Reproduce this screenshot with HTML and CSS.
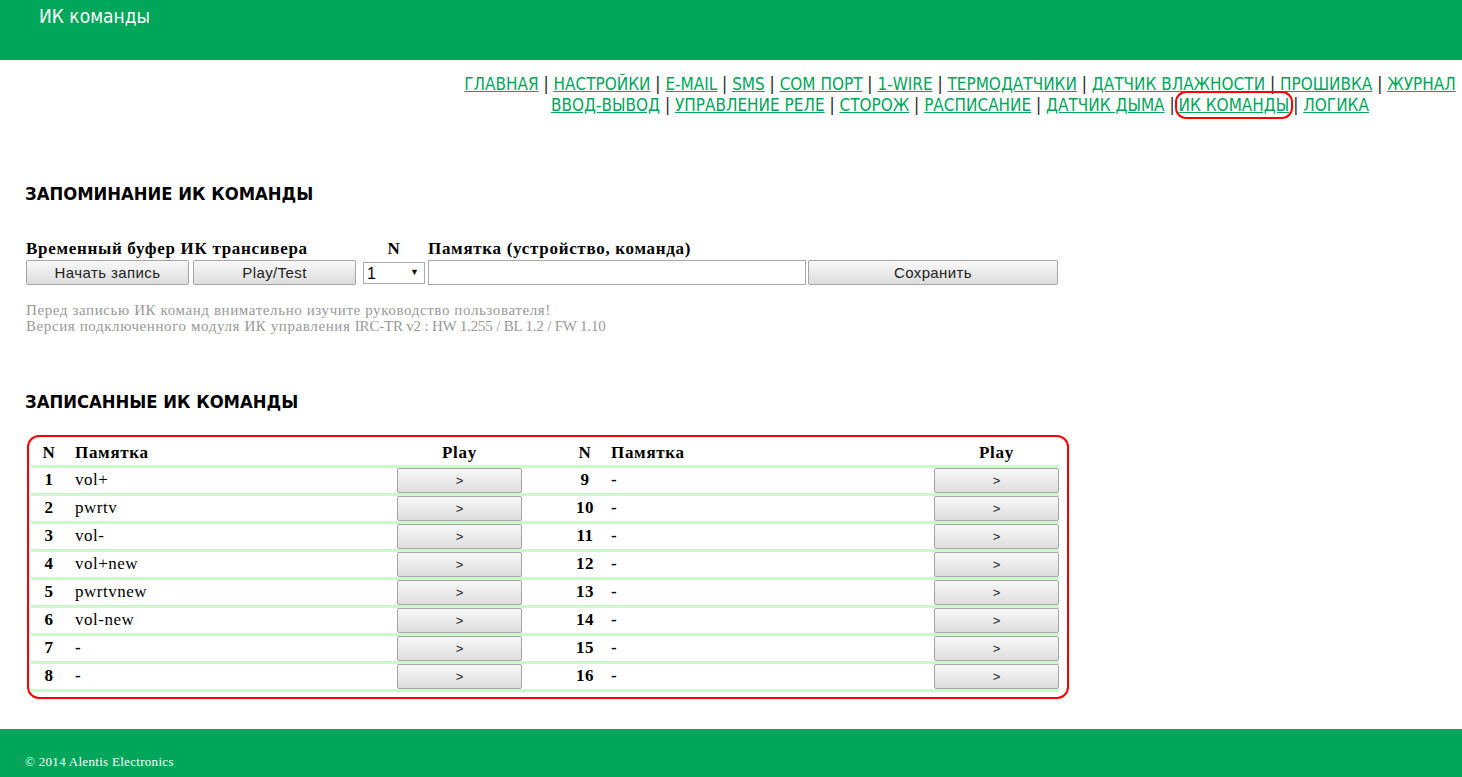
FILE: index.html
```html
<!DOCTYPE html>
<html lang="ru">
<head>
    <meta charset="UTF-8">
    <meta name="viewport" content="width=device-width, initial-scale=1.0">
    <title>ИК команды</title>
    <link rel="stylesheet" href="styles.css">
</head>
<body>
    <header class="top-bar">
        <h1 class="page-title">ИК команды</h1>
    </header>

    <nav class="menu">
        <div class="menu-line">
            <a href="#">ГЛАВНАЯ</a> | <a href="#">НАСТРОЙКИ</a> | <a href="#">E-MAIL</a> | <a href="#">SMS</a> | <a href="#">COM ПОРТ</a> | <a href="#">1-WIRE</a> | <a href="#">ТЕРМОДАТЧИКИ</a> | <a href="#">ДАТЧИК ВЛАЖНОСТИ</a> | <a href="#">ПРОШИВКА</a> | <a href="#">ЖУРНАЛ</a>
        </div>
        <div class="menu-line">
            <a href="#">ВВОД-ВЫВОД</a> | <a href="#">УПРАВЛЕНИЕ РЕЛЕ</a> | <a href="#">СТОРОЖ</a> | <a href="#">РАСПИСАНИЕ</a> | <a href="#">ДАТЧИК ДЫМА</a> |<a href="#" class="active">ИК КОМАНДЫ</a>| <a href="#">ЛОГИКА</a>
        </div>
    </nav>

    <main class="content">
        <h2 class="section-title">ЗАПОМИНАНИЕ ИК КОМАНДЫ</h2>

        <div class="record-form">
            <div class="lbl lbl-buffer">Временный буфер ИК трансивера</div>
            <div class="lbl lbl-n">N</div>
            <div class="lbl lbl-memo">Памятка (устройство, команда)</div>

            <button class="btn btn-form">Начать запись</button>
            <button class="btn btn-form">Play/Test</button>
            <div class="select-wrap">
                <select class="num-select">
                    <option>1</option><option>2</option><option>3</option><option>4</option>
                    <option>5</option><option>6</option><option>7</option><option>8</option>
                </select>
            </div>
            <input type="text" class="memo-input">
            <button class="btn btn-save">Сохранить</button>
        </div>

        <p class="note">
            Перед записью ИК команд внимательно изучите руководство пользователя!<br>
            Версия подключенного модуля ИК управления <span class="ver">IRC-TR v2 : HW 1.255 / BL 1.2 / FW 1.10</span>
        </p>

        <h2 class="section-title second">ЗАПИСАННЫЕ ИК КОМАНДЫ</h2>

        <div class="cmd-box">
            <table class="cmd-table">
                <colgroup>
                    <col style="width:36px"><col style="width:330px"><col style="width:125px">
                    <col style="width:45px">
                    <col style="width:36px"><col style="width:331px"><col style="width:125px">
                </colgroup>
                <thead>
                    <tr>
                        <th class="c-n">N</th><th class="c-memo">Памятка</th><th class="c-play">Play</th>
                        <th></th>
                        <th class="c-n">N</th><th class="c-memo">Памятка</th><th class="c-play">Play</th>
                    </tr>
                </thead>
                <tbody>
                    <tr><td class="c-n">1</td><td class="c-memo">vol+</td><td><button class="btn btn-play">&gt;</button></td><td></td><td class="c-n">9</td><td class="c-memo empty">-</td><td><button class="btn btn-play">&gt;</button></td></tr>
                    <tr><td class="c-n">2</td><td class="c-memo">pwrtv</td><td><button class="btn btn-play">&gt;</button></td><td></td><td class="c-n">10</td><td class="c-memo empty">-</td><td><button class="btn btn-play">&gt;</button></td></tr>
                    <tr><td class="c-n">3</td><td class="c-memo">vol-</td><td><button class="btn btn-play">&gt;</button></td><td></td><td class="c-n">11</td><td class="c-memo empty">-</td><td><button class="btn btn-play">&gt;</button></td></tr>
                    <tr><td class="c-n">4</td><td class="c-memo">vol+new</td><td><button class="btn btn-play">&gt;</button></td><td></td><td class="c-n">12</td><td class="c-memo empty">-</td><td><button class="btn btn-play">&gt;</button></td></tr>
                    <tr><td class="c-n">5</td><td class="c-memo">pwrtvnew</td><td><button class="btn btn-play">&gt;</button></td><td></td><td class="c-n">13</td><td class="c-memo empty">-</td><td><button class="btn btn-play">&gt;</button></td></tr>
                    <tr><td class="c-n">6</td><td class="c-memo">vol-new</td><td><button class="btn btn-play">&gt;</button></td><td></td><td class="c-n">14</td><td class="c-memo empty">-</td><td><button class="btn btn-play">&gt;</button></td></tr>
                    <tr><td class="c-n">7</td><td class="c-memo empty">-</td><td><button class="btn btn-play">&gt;</button></td><td></td><td class="c-n">15</td><td class="c-memo empty">-</td><td><button class="btn btn-play">&gt;</button></td></tr>
                    <tr><td class="c-n">8</td><td class="c-memo empty">-</td><td><button class="btn btn-play">&gt;</button></td><td></td><td class="c-n">16</td><td class="c-memo empty">-</td><td><button class="btn btn-play">&gt;</button></td></tr>
                </tbody>
            </table>
        </div>
    </main>

    <footer class="bottom-bar">
        &copy; 2014 Alentis Electronics
    </footer>
</body>
</html>
```

FILE: styles.css
```css
*{
    padding: 0;
    margin: 0;
    box-sizing: border-box;
}
body{
    background-color: #fff;
    font-family: "Liberation Serif", "Times New Roman", serif;
    font-size: 16px;
    color: #000;
}

/* top green bar */
.top-bar{
    height: 60px;
    background-color: #00a65a;
    padding: 4px 0 0 39px;
}
.page-title{
    font-family: "DejaVu Sans Condensed", "DejaVu Sans", sans-serif;
    font-weight: normal;
    font-size: 19px;
    line-height: 24px;
    color: #fff;
}

/* menu */
.menu{
    width: 1004px;
    margin: 14px 0 0 auto;
    text-align: center;
    font-family: "DejaVu Sans Condensed", "DejaVu Sans", sans-serif;
    font-size: 17px;
    line-height: 21px;
    color: #222;
}
.menu-line{
    white-space: nowrap;
}
.menu a{
    color: #00a65a;
    text-decoration: underline;
}
.menu a.active{
    border: 2px solid #f00;
    border-radius: 11px;
    padding: 2px 2px;
}

/* content */
.content{
    padding-left: 25px;
}
.section-title{
    font-family: "DejaVu Sans Condensed", "DejaVu Sans", sans-serif;
    font-weight: bold;
    font-size: 18.3px;
    line-height: 22px;
    margin-top: 67px;
}
.section-title.second{
    margin-top: 57px;
}

.record-form{
    display: grid;
    grid-template-columns: 167px 170px 65px 380px 250px;
    margin: 34px 0 0 1px;
}
.lbl{
    font-weight: bold;
    font-size: 17px;
    letter-spacing: 0.7px;
    line-height: 20px;
}
.lbl-buffer{
    grid-column: 1 / 3;
}
.lbl-n{
    text-align: center;
    width: 62px;
}
.lbl-memo{
    grid-column: 4 / 6;
}

.btn{
    font-family: "Liberation Sans", Arial, sans-serif;
    color: #222;
    background: linear-gradient(#f8f8f8, #dddddd);
    border: 1px solid #a6a6a6;
    border-radius: 2px;
}
.btn-form,
.btn-save{
    height: 25px;
    margin-top: 1px;
    font-size: 15px;
    letter-spacing: 0.4px;
}
.btn-form{
    width: 163px;
}
.btn-save{
    width: 250px;
}
.select-wrap{
    position: relative;
    width: 62px;
    height: 22px;
    margin-top: 3px;
}
.select-wrap::after{
    content: "\25BC";
    position: absolute;
    right: 6px;
    top: 5px;
    font-size: 9px;
    color: #111;
    pointer-events: none;
}
.num-select{
    appearance: none;
    -webkit-appearance: none;
    width: 62px;
    height: 22px;
    border: 1px solid #a9a9a9;
    background: #fff;
    font-family: "Liberation Sans", Arial, sans-serif;
    font-size: 16px;
    padding-left: 3px;
    color: #000;
}
.memo-input{
    width: 378px;
    height: 25px;
    margin-top: 1px;
    border: 1px solid #a9a9a9;
    font-size: 15px;
}

.note{
    margin: 17px 0 0 1px;
    color: #999;
    font-size: 15px;
    letter-spacing: 0.6px;
    line-height: 16px;
}
.note .ver{
    letter-spacing: -0.2px;
}

/* recorded commands */
.cmd-box{
    width: 1042px;
    margin: 22px 0 0 2px;
    border: 2px solid #f00;
    border-radius: 12px;
    padding: 2px 7px 5px 2px;
}
.cmd-table{
    border-collapse: collapse;
    table-layout: fixed;
    width: 1028px;
}
.cmd-table th,
.cmd-table td{
    padding: 0;
    border-bottom: 3px solid #ccf9cc;
    font-size: 17px;
    letter-spacing: 0.5px;
    height: 28px;
    vertical-align: middle;
}
.cmd-table th{
    height: 27px;
    padding-top: 2px;
    letter-spacing: 0.7px;
}
.c-n{
    text-align: center;
    font-weight: bold;
}
.c-memo{
    text-align: left;
    padding-left: 8px !important;
}
th.c-memo{
    font-weight: bold;
}
.c-memo.empty{
    font-weight: bold;
}
.c-play{
    text-align: center;
}
.btn-play{
    display: block;
    width: 125px;
    height: 25px;
    font-size: 13px;
    letter-spacing: 0;
}

/* footer */
.bottom-bar{
    margin-top: 30px;
    background-color: #00a65a;
    color: #fff;
    font-size: 13px;
    letter-spacing: 0.3px;
    line-height: 16px;
    padding: 25px 25px 7px;
}
```
